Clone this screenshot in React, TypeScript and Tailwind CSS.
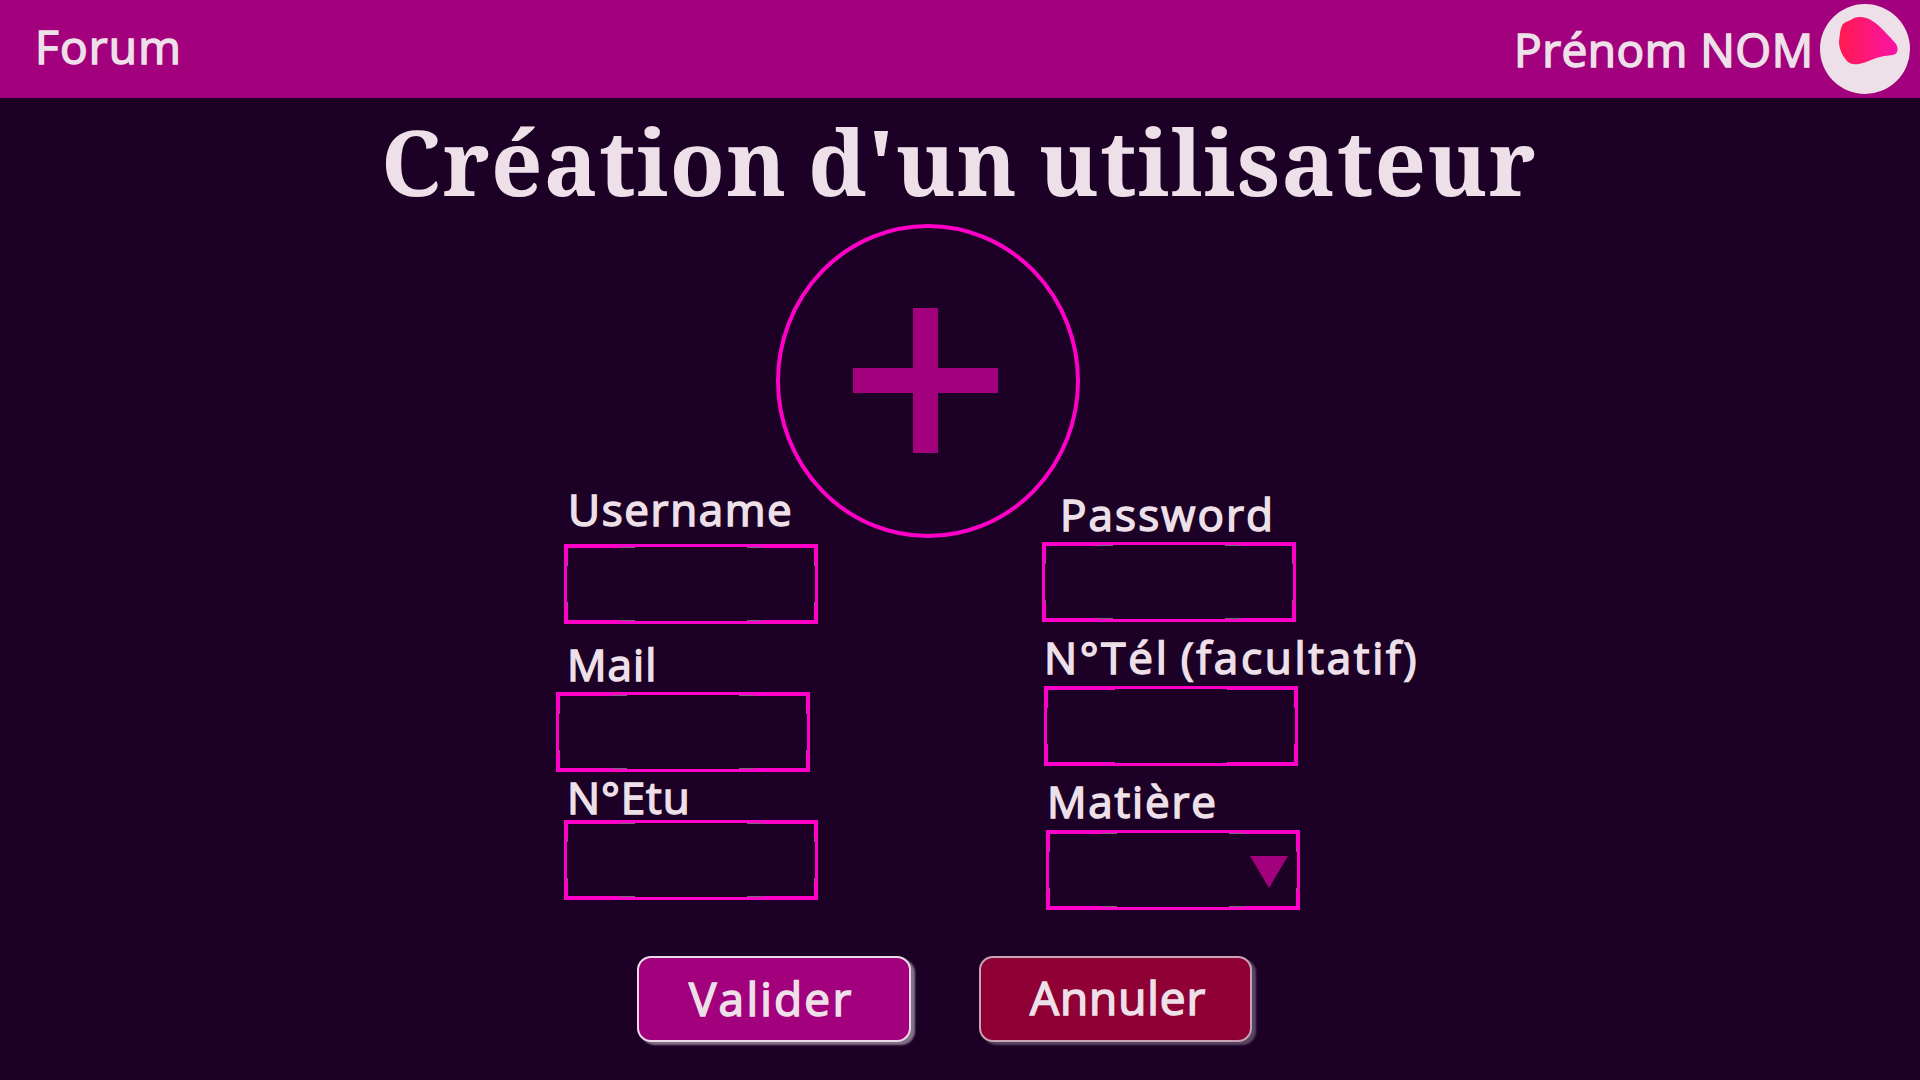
type FieldProps = {
  label: string;
  labelClass: string;
  fieldClass: string;
  seams?: boolean;
  dropdown?: boolean;
};

function Frame({ seams }: { seams: boolean }) {
  return (
    <svg width="254" height="80" viewBox="0 0 254 80" shapeRendering="crispEdges" className="block">
      <path
        fillRule="evenodd"
        fill="#ff00c8"
        d="M0 0H254V80H0ZM4 4V22H3V58H4V76H71V77H183V76H250V58H251V22H250V4H183V3H71V4Z"
      />
      {seams && (
        <path
          fill="#7d6478"
          d="M56 3h15v1h-15zM183 3h15v1h-15zM56 76h15v1h-15zM183 76h15v1h-15zM3 18h1v4h-1zM3 58h1v4h-1zM250 18h1v4h-1zM250 58h1v4h-1z"
        />
      )}
    </svg>
  );
}

function Field({ label, labelClass, fieldClass, seams = true, dropdown = false }: FieldProps) {
  return (
    <div className="flex flex-col items-start">
      <label className={`block whitespace-nowrap text-[44px] leading-none ${labelClass}`}>{label}</label>
      <div className={`relative h-[80px] w-[254px] ${fieldClass}`}>
        <Frame seams={seams} />
        {dropdown && (
          <svg width="38" height="32" viewBox="0 0 38 32" className="absolute left-[204px] top-[26px]">
            <path d="M0 0H38L19 32Z" fill="#a2007c" />
          </svg>
        )}
      </div>
    </div>
  );
}

export default function App() {
  return (
    <div className="h-[1080px] w-[1920px] overflow-hidden bg-[#1d0026] font-['Open_Sans','Noto_Sans',sans-serif] font-normal text-[#eee0e8] [-webkit-text-stroke:1.5px_#eee0e8]">
      <header className="flex h-[98px] items-start bg-[#a2007c] pl-[35px] pr-[10px] text-[46px] leading-none">
        <span className="mt-[23px] tracking-[1.2px]">Forum</span>
        <span className="ml-auto mt-[26px] w-[306px] whitespace-nowrap tracking-[0.5px]">Prénom NOM</span>
        <svg width="90" height="90" viewBox="0 0 90 90" className="mt-[4px] shrink-0">
          <defs>
            <linearGradient id="blob" x1="0" y1="0" x2="1" y2="0">
              <stop offset="0" stopColor="#ff1a4f" />
              <stop offset="1" stopColor="#fa14a8" />
            </linearGradient>
          </defs>
          <circle cx="45" cy="45" r="45" fill="#eee0e8" />
          <path
            d="M23 20C26 17.500 30 16.500 34 14C38 12.300 44 13 48 14.500C58 19 66 29 74 37.500C77 41 79 45 76.500 49C74 52 69 51 62 52.500C54 54 47 58.500 39 60C34 60.500 30 60.500 27 57C22 51.500 19 44 19 38C19.800 32 20 24 23 20Z"
            fill="url(#blob)"
          />
        </svg>
      </header>

      <main>
        <h1 className="ml-[381px] mt-[18px] whitespace-nowrap font-['Noto_Serif','Liberation_Serif',serif] text-[90px] font-bold leading-none tracking-[1.3px] [word-spacing:-4px] [-webkit-text-stroke:0px]">
          Création d'un utilisateur
        </h1>

        <svg width="304" height="314" viewBox="0 0 304 314" className="ml-[776px] mt-[18px] block">
          <ellipse cx="152" cy="157" rx="150" ry="155" fill="none" stroke="#ff00c8" strokeWidth="4" />
          <path d="M137 84H162V144H222V169H162V229H137V169H77V144H137Z" fill="#a2007c" />
        </svg>

        <form className="-mt-[51px] ml-[556px] flex h-[423px]">
          <div className="flex w-[486px] flex-col">
            <Field label="Username" labelClass="ml-[12px] tracking-[1.6px]" fieldClass="ml-[8px] mt-[13px]" />
            <div className="mt-[18px]">
              <Field label="Mail" labelClass="ml-[11px] tracking-[1px]" fieldClass="mt-[6px]" />
            </div>
            <div className="mt-[3px]">
              <Field label="N°Etu" labelClass="ml-[11px] tracking-[0.9px]" fieldClass="ml-[8px] mt-[1px]" />
            </div>
          </div>
          <div className="flex flex-col pt-[5px]">
            <Field label="Password" labelClass="ml-[18px] tracking-[2.1px]" fieldClass="mt-[6px]" />
            <div className="mt-[13px]">
              <Field
                label="N°Tél (facultatif)"
                labelClass="ml-[2px] tracking-[2.7px] [word-spacing:-3px]"
                fieldClass="ml-[2px] mt-[7px]"
                seams={false}
              />
            </div>
            <div className="mt-[13px]">
              <Field label="Matière" labelClass="ml-[5px] tracking-[1.8px]" fieldClass="ml-[4px] mt-[7px]" dropdown />
            </div>
          </div>
        </form>

        <div className="ml-[637px] mt-[46px] flex gap-[68px] text-[46px] leading-none">
          <button className="flex h-[86px] w-[274px] rounded-[14px] border-2 border-[#eddbe7] bg-[#a2007c] pl-[50px] pt-[17px] font-normal tracking-[2.2px] shadow-[4px_3px_2px_#84718a]">
            Valider
          </button>
          <button className="flex h-[86px] w-[273px] rounded-[14px] border-2 border-[#c9a3b5] bg-[#8f0034] pl-[49px] pt-[16px] font-normal tracking-[0.9px] shadow-[4px_3px_2px_#5a4662]">
            Annuler
          </button>
        </div>
      </main>
    </div>
  );
}
